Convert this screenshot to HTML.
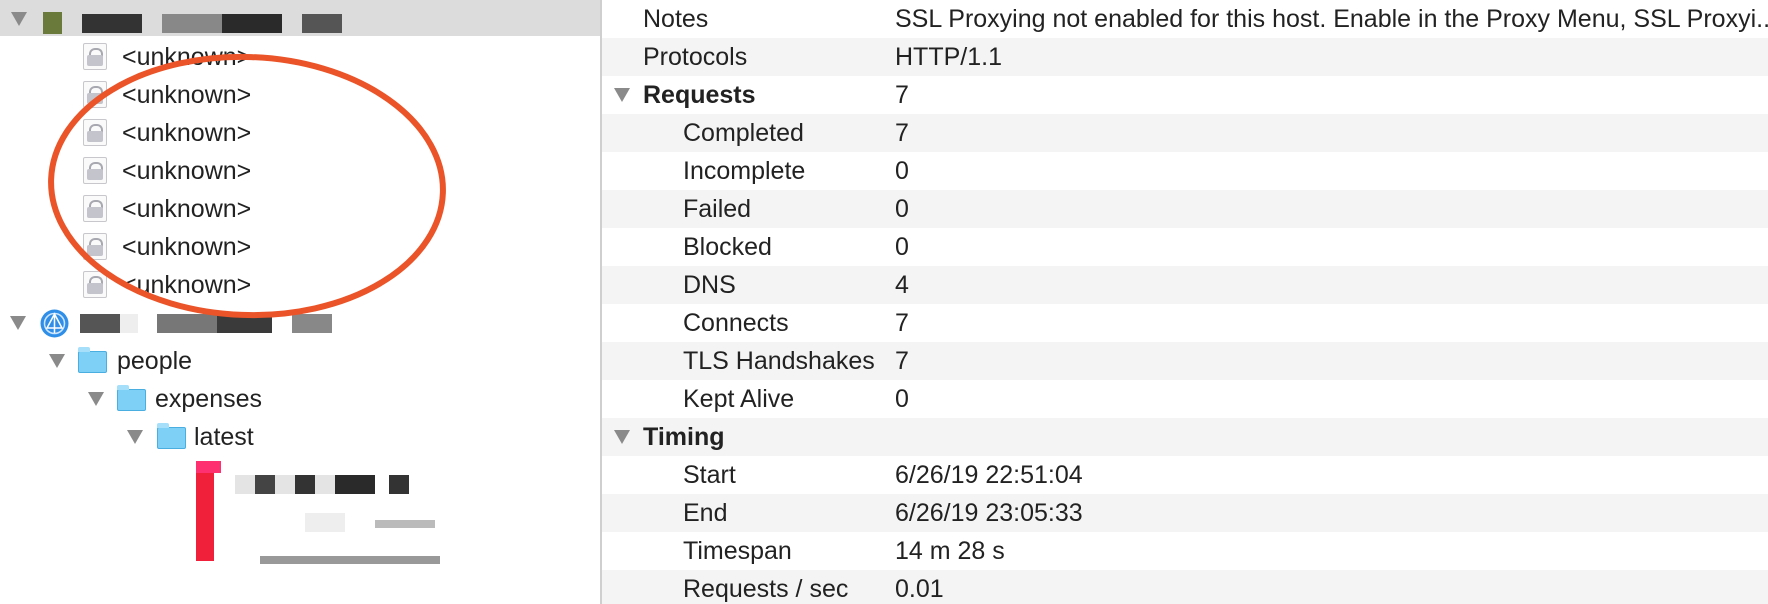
<!DOCTYPE html>
<html><head><meta charset="utf-8"><style>
*{margin:0;padding:0;box-sizing:border-box}
body{width:1768px;height:604px;overflow:hidden;background:#fff;font-family:"Liberation Sans",Arial,sans-serif;font-size:25px;color:#222;position:relative}
.l{position:absolute;left:0;top:0;width:600px;height:604px;overflow:hidden}
.div{position:absolute;left:600px;top:0;width:2px;height:604px;background:#cfcfcf}
.r{position:absolute;left:602px;top:0;right:0;height:604px;overflow:hidden}
.row{position:absolute;left:0;right:0;height:38px;line-height:38px;white-space:nowrap}
.tri{position:absolute;width:0;height:0;border-left:8px solid transparent;border-right:8px solid transparent;border-top:14px solid #8a8a8a;top:12px}
.t{position:absolute}
.lock{position:absolute;width:24px;height:27px;top:5px;background:#fafafa;border:1px solid #c8c8cc;border-radius:2px}
.lock:before{content:"";position:absolute;left:5px;top:4px;width:10px;height:10px;border:2px solid #a8a8b0;border-bottom:none;border-radius:6px 6px 0 0}
.lock:after{content:"";position:absolute;left:3px;top:11px;width:16px;height:11px;background:#c4c4cc;border-radius:2px}
.fold{position:absolute;width:29px;height:22px;top:9px;background:#7fd0f6;border:1px solid #4aaee0;border-radius:2px}
.fold:before{content:"";position:absolute;left:-1px;top:-5px;width:12px;height:5px;background:#a5dffa;border-radius:2px 2px 0 0}
.blk{position:absolute;height:19px}
</style></head><body>
<div class="l">
 <div class="row" style="top:0;height:36px;background:#dcdcdc">
  <div class="tri" style="left:11px"></div>
  <div style="position:absolute;left:43px;top:12px;width:19px;height:22px;background:#6a7a3a"></div>
  <div class="blk" style="left:82px;top:14px;width:60px;background:#333"></div>
  <div class="blk" style="left:162px;top:14px;width:60px;background:#888"></div>
  <div class="blk" style="left:222px;top:14px;width:60px;background:#2a2a2a"></div>
  <div class="blk" style="left:302px;top:14px;width:40px;background:#555"></div>
 </div>
 <div class="row" style="top:38px"><div class="lock" style="left:83px"></div><span class="t" style="left:122px">&lt;unknown&gt;</span></div>
 <div class="row" style="top:76px"><div class="lock" style="left:83px"></div><span class="t" style="left:122px">&lt;unknown&gt;</span></div>
 <div class="row" style="top:114px"><div class="lock" style="left:83px"></div><span class="t" style="left:122px">&lt;unknown&gt;</span></div>
 <div class="row" style="top:152px"><div class="lock" style="left:83px"></div><span class="t" style="left:122px">&lt;unknown&gt;</span></div>
 <div class="row" style="top:190px"><div class="lock" style="left:83px"></div><span class="t" style="left:122px">&lt;unknown&gt;</span></div>
 <div class="row" style="top:228px"><div class="lock" style="left:83px"></div><span class="t" style="left:122px">&lt;unknown&gt;</span></div>
 <div class="row" style="top:266px"><div class="lock" style="left:83px"></div><span class="t" style="left:122px">&lt;unknown&gt;</span></div>
 <div class="row" style="top:304px">
  <div class="tri" style="left:10px"></div>
  <svg style="position:absolute;left:40px;top:5px" width="29" height="29" viewBox="0 0 29 29"><circle cx="14.5" cy="14.5" r="14" fill="#2f8fe8"/><circle cx="14.5" cy="14.5" r="10" fill="none" stroke="#cfe6ff" stroke-width="1.5"/><path d="M14.5 5 L7 19 L22 19 Z M14.5 5 L14.5 24" stroke="#fff" stroke-width="1.5" fill="none"/></svg>
  <div class="blk" style="left:80px;top:10px;width:40px;background:#555"></div>
  <div class="blk" style="left:120px;top:10px;width:18px;background:#eee"></div>
  <div class="blk" style="left:157px;top:10px;width:60px;background:#777"></div>
  <div class="blk" style="left:217px;top:10px;width:55px;background:#3a3a3a"></div>
  <div class="blk" style="left:292px;top:10px;width:40px;background:#888"></div>
 </div>
 <div class="row" style="top:342px"><div class="tri" style="left:49px"></div><div class="fold" style="left:78px"></div><span class="t" style="left:117px">people</span></div>
 <div class="row" style="top:380px"><div class="tri" style="left:88px"></div><div class="fold" style="left:117px"></div><span class="t" style="left:155px">expenses</span></div>
 <div class="row" style="top:418px"><div class="tri" style="left:127px"></div><div class="fold" style="left:157px"></div><span class="t" style="left:194px">latest</span></div>
 <div style="position:absolute;left:196px;top:461px;width:18px;height:100px;background:#f0203a"></div>
 <div style="position:absolute;left:196px;top:461px;width:25px;height:12px;background:#ff3070"></div>
 <div class="blk" style="left:235px;top:475px;width:20px;background:#e4e4e4"></div>
 <div class="blk" style="left:255px;top:475px;width:20px;background:#444"></div>
 <div class="blk" style="left:275px;top:475px;width:20px;background:#e4e4e4"></div>
 <div class="blk" style="left:295px;top:475px;width:20px;background:#333"></div>
 <div class="blk" style="left:315px;top:475px;width:20px;background:#e4e4e4"></div>
 <div class="blk" style="left:335px;top:475px;width:40px;background:#2a2a2a"></div>
 <div class="blk" style="left:389px;top:475px;width:20px;background:#333"></div>
 <div class="blk" style="left:305px;top:513px;width:40px;background:#eee"></div>
 <div class="blk" style="left:375px;top:520px;width:60px;background:#bbb;height:8px"></div>
 <div class="blk" style="left:260px;top:556px;width:180px;background:#999;height:8px"></div>
 <svg style="position:absolute;left:0;top:0" width="600" height="604"><ellipse cx="247" cy="186" rx="196" ry="129" fill="none" stroke="#ea5428" stroke-width="6" transform="rotate(2 247 186)"/></svg>
</div>
<div class="div"></div>
<div class="r">
 <div class="row" style="top:0"><span class="t" style="left:41px">Notes</span><span class="t" style="left:293px">SSL Proxying not enabled for this host. Enable in the Proxy Menu, SSL Proxyi...</span></div>
 <div class="row" style="top:38px;background:#f4f4f4"><span class="t" style="left:41px">Protocols</span><span class="t" style="left:293px">HTTP/1.1</span></div>
 <div class="row" style="top:76px"><div class="tri" style="left:12px"></div><b class="t" style="left:41px">Requests</b><span class="t" style="left:293px">7</span></div>
 <div class="row" style="top:114px;background:#f4f4f4"><span class="t" style="left:81px">Completed</span><span class="t" style="left:293px">7</span></div>
 <div class="row" style="top:152px"><span class="t" style="left:81px">Incomplete</span><span class="t" style="left:293px">0</span></div>
 <div class="row" style="top:190px;background:#f4f4f4"><span class="t" style="left:81px">Failed</span><span class="t" style="left:293px">0</span></div>
 <div class="row" style="top:228px"><span class="t" style="left:81px">Blocked</span><span class="t" style="left:293px">0</span></div>
 <div class="row" style="top:266px;background:#f4f4f4"><span class="t" style="left:81px">DNS</span><span class="t" style="left:293px">4</span></div>
 <div class="row" style="top:304px"><span class="t" style="left:81px">Connects</span><span class="t" style="left:293px">7</span></div>
 <div class="row" style="top:342px;background:#f4f4f4"><span class="t" style="left:81px">TLS Handshakes</span><span class="t" style="left:293px">7</span></div>
 <div class="row" style="top:380px"><span class="t" style="left:81px">Kept Alive</span><span class="t" style="left:293px">0</span></div>
 <div class="row" style="top:418px;background:#f4f4f4"><div class="tri" style="left:12px"></div><b class="t" style="left:41px">Timing</b></div>
 <div class="row" style="top:456px"><span class="t" style="left:81px">Start</span><span class="t" style="left:293px">6/26/19 22:51:04</span></div>
 <div class="row" style="top:494px;background:#f4f4f4"><span class="t" style="left:81px">End</span><span class="t" style="left:293px">6/26/19 23:05:33</span></div>
 <div class="row" style="top:532px"><span class="t" style="left:81px">Timespan</span><span class="t" style="left:293px">14 m 28 s</span></div>
 <div class="row" style="top:570px;background:#f4f4f4"><span class="t" style="left:81px">Requests / sec</span><span class="t" style="left:293px">0.01</span></div>
</div>
</body></html>
